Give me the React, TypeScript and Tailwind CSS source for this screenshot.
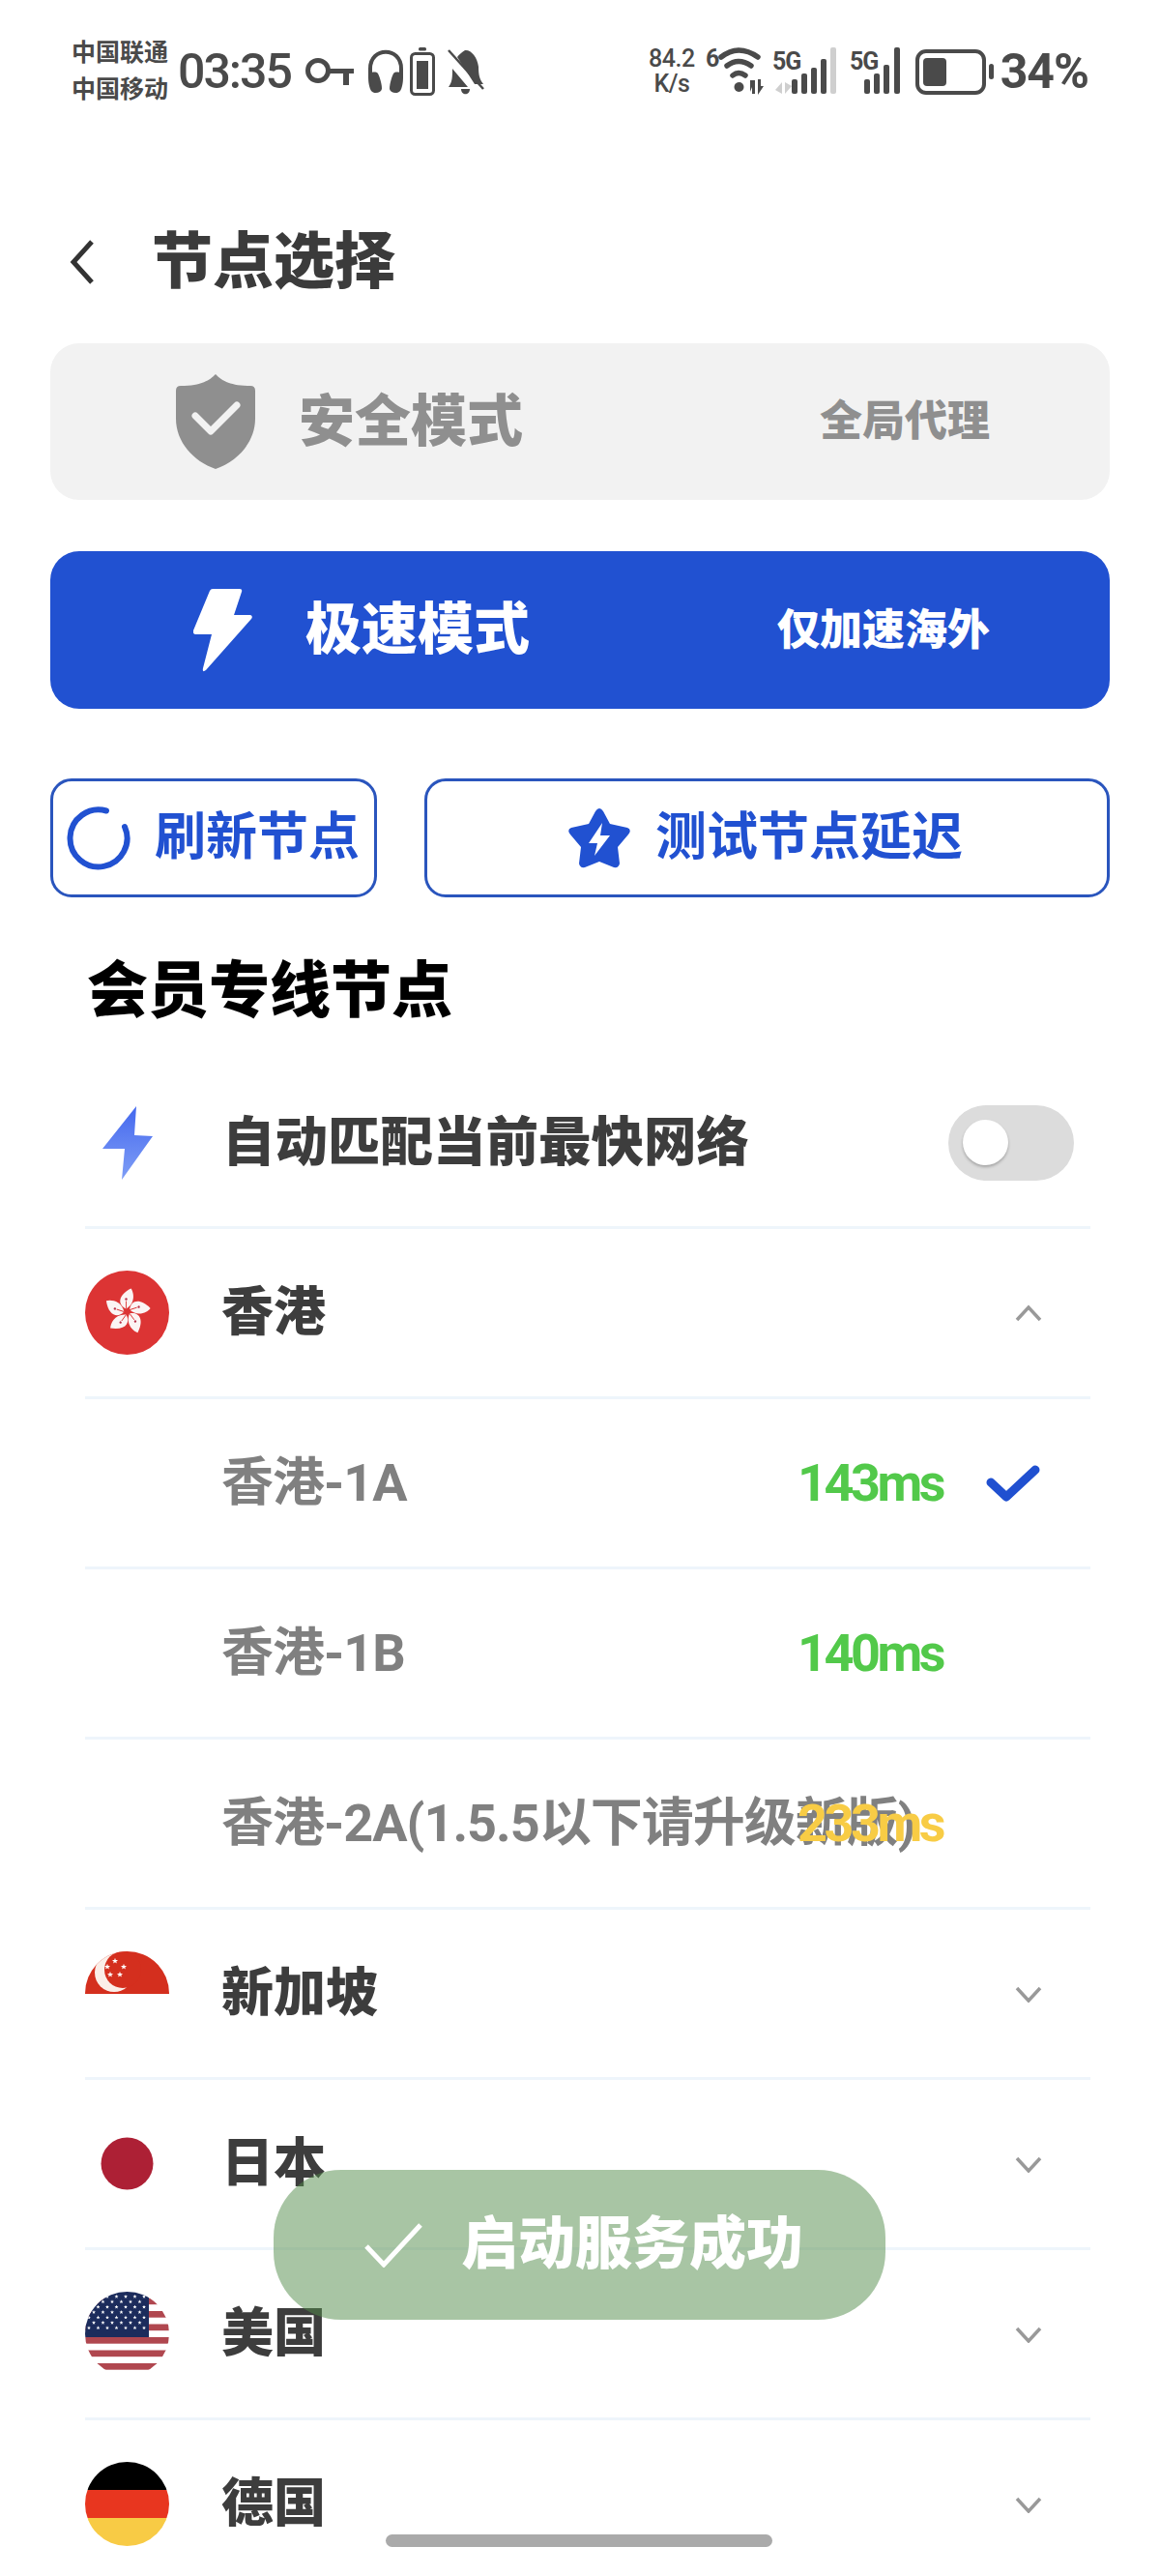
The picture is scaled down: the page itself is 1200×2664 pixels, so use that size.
import React from "react";

const Chevron = ({ up = false }: { up?: boolean }) => (
  <svg width="28" height="18" viewBox="0 0 28 18" fill="none">
    <path
      d={up ? "M2 16 L14 3 L26 16" : "M2 3 L14 16 L26 3"}
      stroke="#999999"
      strokeWidth="3.5"
    />
  </svg>
);

const Star = ({ x, y, r = 3.2, fill = "#ffffff" }: { x: number; y: number; r?: number; fill?: string }) => {
  const points = [];
  for (let i = 0; i < 10; i++) {
    const rad = i % 2 === 0 ? r : r * 0.42;
    const a = (Math.PI / 5) * i - Math.PI / 2;
    points.push(`${x + rad * Math.cos(a)},${y + rad * Math.sin(a)}`);
  }
  return <polygon points={points.join(" ")} fill={fill} />;
};

const HongKongFlag = () => (
  <svg width="87" height="87" viewBox="0 0 87 87">
    <circle cx="43.5" cy="43.5" r="43.5" fill="#dc3434" />
    {[0, 72, 144, 216, 288].map((deg) => (
      <g key={deg} transform={`translate(43.5 42.5) rotate(${deg})`}>
        <path d="M-1 -3 C-10 -7 -10 -17 4 -24 C7 -20 9 -9 -1 -3 Z" fill="#fbf4f4" />
        <circle cx="-1" cy="-13" r="1.2" fill="#b8324a" />
        <path d="M-1 -3 L-1 -11" stroke="#dc3434" strokeWidth="0.9" />
      </g>
    ))}
  </svg>
);

const SingaporeFlag = () => (
  <svg width="87" height="87" viewBox="0 0 87 87">
    <defs>
      <clipPath id="sg-clip">
        <circle cx="43.5" cy="43.5" r="43.5" />
      </clipPath>
    </defs>
    <g clipPath="url(#sg-clip)">
      <rect width="87" height="44" fill="#d42f1e" />
      <circle cx="30" cy="22" r="20" fill="#fbeee8" />
      <circle cx="39" cy="19" r="19" fill="#d42f1e" />
      <Star x={31} y={10} />
      <Star x={23} y={16} />
      <Star x={40} y={16} />
      <Star x={26} y={24} />
      <Star x={36} y={24} />
    </g>
  </svg>
);

const JapanFlag = () => (
  <svg width="87" height="87" viewBox="0 0 87 87">
    <circle cx="43.5" cy="43.5" r="27" fill="#ad2035" />
  </svg>
);

const UsaFlag = () => {
  const stars = [];
  for (let row = 0; row < 7; row++) {
    const count = row % 2 === 0 ? 7 : 6;
    for (let col = 0; col < count; col++) {
      stars.push(<Star key={`${row}-${col}`} x={(row % 2 === 0 ? 4 : 9) + col * 9.5} y={5 + row * 5.4} r={2.1} />);
    }
  }
  return (
    <svg width="87" height="87" viewBox="0 0 87 87">
      <defs>
        <clipPath id="us-clip">
          <circle cx="43.5" cy="43.5" r="43.5" />
        </clipPath>
      </defs>
      <g clipPath="url(#us-clip)">
        <rect width="87" height="87" fill="#ffffff" />
        {[6.5, 20, 33.5, 47, 60.5, 74].map((y) => (
          <rect key={y} y={y} width="87" height="6.7" fill="#b0474f" />
        ))}
        <rect width="66" height="47" fill="#1c2c5c" />
        {stars}
      </g>
    </svg>
  );
};

const GermanyFlag = () => (
  <svg width="87" height="87" viewBox="0 0 87 87">
    <defs>
      <clipPath id="de-clip">
        <circle cx="43.5" cy="43.5" r="43.5" />
      </clipPath>
    </defs>
    <g clipPath="url(#de-clip)">
      <rect width="87" height="29" fill="#000000" />
      <rect y="29" width="87" height="29" fill="#e8361f" />
      <rect y="58" width="87" height="29" fill="#f8cb45" />
    </g>
  </svg>
);

const Bolt = ({ fill }: { fill: string }) => (
  <svg width="62" height="86" viewBox="0 0 62 86">
    <path
      d="M20 0 L48 0 Q51 0 50 3 L42 27 L59 27 Q62 28 60 31 L13 84 Q9 87 10 82 L19 47 L2 47 Q-1 46 0 43 L17 2 Q18 0 20 0 Z"
      fill={fill}
    />
  </svg>
);

const StatusIcons = () => (
  <div className="flex items-center">
    <div className="flex flex-col items-center text-[25px] leading-[26px] font-medium tracking-[-0.5px]">
      <span className="mt-[-1px]">84.2</span>
      <span>K/s</span>
    </div>
    {/* wifi */}
    <svg width="68" height="52" viewBox="0 0 68 52" className="ml-[11px]" fill="none">
      <text x="0" y="21" fontSize="25" fontWeight="700" fill="#4a4a4a">6</text>
      <path d="M16 11 Q34 -3 54 11" stroke="#4a4a4a" strokeWidth="5.5" strokeLinecap="round" />
      <path d="M22 20 Q34 11 47 20" stroke="#4a4a4a" strokeWidth="5.5" strokeLinecap="round" />
      <path d="M28 30 Q34 25 41 30" stroke="#4a4a4a" strokeWidth="5.5" strokeLinecap="round" />
      <circle cx="34.5" cy="42" r="5" fill="#4a4a4a" />
      <path d="M46 47 L46 35 L51 35 L51 49 L48 49 L48 42 Z M54 34 L57 34 L57 41 L60 41 L54 50 Z" fill="#4a4a4a" />
    </svg>
    {/* first sim */}
    <svg width="68" height="50" viewBox="0 0 68 50" className="ml-[1px]" fill="none">
      <text x="0" y="23" fontSize="25" fontWeight="700" letterSpacing="-1" fill="#4a4a4a">5G</text>
      <path d="M3 44 L10 36 L10 48 Z M13 36 L13 48 L20 40 Z" fill="#cfcfcf" />
      <rect x="20" y="33" width="6" height="15" rx="2" fill="#4a4a4a" />
      <rect x="30" y="27" width="6" height="21" rx="2" fill="#4a4a4a" />
      <rect x="40" y="21" width="6" height="27" rx="2" fill="#4a4a4a" />
      <rect x="50" y="12" width="6" height="36" rx="2" fill="#4a4a4a" />
      <rect x="60" y="0" width="6" height="48" rx="2" fill="#cfcfcf" />
    </svg>
    {/* second sim */}
    <svg width="62" height="50" viewBox="0 0 62 50" className="ml-[12px]" fill="none">
      <text x="0" y="23" fontSize="25" fontWeight="700" letterSpacing="-1" fill="#4a4a4a">5G</text>
      <rect x="15" y="33" width="6" height="15" rx="2" fill="#4a4a4a" />
      <rect x="25" y="27" width="6" height="21" rx="2" fill="#4a4a4a" />
      <rect x="35" y="18" width="6" height="30" rx="2" fill="#4a4a4a" />
      <rect x="46" y="0" width="6" height="48" rx="2" fill="#4a4a4a" />
    </svg>
    {/* battery */}
    <div className="ml-[6px] flex items-center">
      <div className="flex items-center w-[73px] h-[47px] border-[4px] border-[#4a4a4a] rounded-[11px] pl-[4px]">
        <div className="w-[24px] h-[29px] bg-[#4a4a4a] rounded-[4px]" />
      </div>
      <div className="ml-[3px] w-[5px] h-[16px] bg-[#4a4a4a] rounded-[3px]" />
    </div>
    <span className="ml-[7px] text-[50px] leading-none font-bold tracking-[-1px]">34%</span>
  </div>
);

const LeftIcons = () => (
  <div className="flex items-center">
    {/* key */}
    <svg width="50" height="32" viewBox="0 0 50 32" className="ml-[15px]" fill="none">
      <circle cx="13" cy="15" r="10.5" stroke="#4a4a4a" strokeWidth="5" />
      <path d="M24 13 H50 V18 H45 V30 H39 V18 H24 Z" fill="#4a4a4a" />
    </svg>
    {/* headphones */}
    <svg width="38" height="46" viewBox="0 0 38 46" className="ml-[14px]" fill="none">
      <path d="M3 30 V20 C3 -3 35 -3 35 20 V30" stroke="#4a4a4a" strokeWidth="4" />
      <path d="M1 29 C1 24 8 22 11 25 C13 29 15 36 15 41 C14 46 6 46 4 43 C2 40 1 34 1 29 Z" fill="#4a4a4a" />
      <path d="M37 29 C37 24 30 22 27 25 C25 29 23 36 23 41 C24 46 32 46 34 43 C36 40 37 34 37 29 Z" fill="#4a4a4a" />
    </svg>
    {/* small battery */}
    <svg width="26" height="50" viewBox="0 0 26 50" className="ml-[6px]" fill="none">
      <rect x="9" y="0" width="8" height="3.5" rx="1.5" fill="#4a4a4a" />
      <rect x="1.5" y="6.5" width="23" height="42" rx="4" stroke="#4a4a4a" strokeWidth="3" />
      <rect x="7" y="14" width="12" height="29" fill="#4a4a4a" />
    </svg>
    {/* muted bell */}
    <svg width="38" height="50" viewBox="0 0 38 50" className="ml-[13px]" fill="none">
      <path d="M18 3 C24 2 31 10 32 20 C32 28 33 33 37 38 L28 38 L10 10 C12 7 15 5 18 3 Z" fill="#4a4a4a" />
      <path d="M5 22 L21 41 L1 41 C5 36 5 30 5 22 Z" fill="#4a4a4a" />
      <path d="M14 43 H23 C23 50 14 50 14 43 Z" fill="#4a4a4a" />
      <path d="M1 3 L37 43" stroke="#4a4a4a" strokeWidth="2.5" />
    </svg>
  </div>
);

const Divider = () => <div className="h-[3px] mx-[88px] w-[1040px] bg-[#eef5fb]" />;

const CountryRow = ({ flag, name, open = false }: { flag: React.ReactNode; name: string; open?: boolean }) => (
  <div className="flex items-center h-[173px] pl-[88px] pr-[122px]">
    <div className="w-[87px] h-[87px] shrink-0">{flag}</div>
    <span className="ml-[54px] flex-1 text-[54px] font-black text-[#3d3d3d]">{name}</span>
    <Chevron up={open} />
  </div>
);

const NodeRow = ({ name, ms, color, active = false }: { name: string; ms: string; color: string; active?: boolean }) => (
  <div className="flex items-center h-[173px] pl-[229px] pr-[72px]">
    <span className="w-0 grow whitespace-nowrap text-[54px] font-bold text-[#808080] tracking-[-1px]">{name}</span>
    <span className={`${color} text-[54px] font-bold tracking-[-3.5px]`}>{ms}</span>
    <div className="w-[153px] flex justify-end pr-[52px]">
      {active && (
        <svg width="56" height="40" viewBox="0 0 56 40" fill="none">
          <path d="M5 19 L21 34 L51 6" stroke="#2050d0" strokeWidth="9" strokeLinecap="round" strokeLinejoin="round" />
        </svg>
      )}
    </div>
  </div>
);

export default function App() {
  return (
    <div className="relative w-[1200px] h-[2664px] overflow-hidden bg-white font-['Roboto','Noto_Sans_CJK_SC',sans-serif]">
      {/* status bar */}
      <div className="flex items-center justify-between h-[68px] mt-[40px] pl-[74px] pr-[74px] text-[#4a4a4a]">
        <div className="flex items-center">
          <div className="flex flex-col text-[25px] leading-[38px] font-bold">
            <span>中国联通</span>
            <span>中国移动</span>
          </div>
          <span className="ml-[10px] text-[50px] leading-none font-medium tracking-[-2px]">03:35</span>
          <LeftIcons />
        </div>
        <StatusIcons />
      </div>

      {/* header */}
      <div className="flex items-center h-[72px] mt-[127px] pl-[72px]">
        <svg width="26" height="46" viewBox="0 0 26 46" fill="none">
          <path d="M23 2 L4 23 L23 44" stroke="#333333" strokeWidth="5" />
        </svg>
        <span className="ml-[59px] text-[63px] font-black text-[#3b3b3b]">节点选择</span>
      </div>

      {/* mode cards */}
      <div className="flex flex-col gap-[53px] mx-[52px] mt-[48px]">
        <div className="flex items-center h-[162px] rounded-[30px] bg-[#f2f2f2] pl-[130px] pr-[124px]">
          <svg width="82" height="98" viewBox="0 0 82 98">
            <path
              d="M41 0 C47 6 55 12 77 12 Q82 12 82 17 L82 46 C82 70 64 90 41 98 C18 90 0 70 0 46 L0 17 Q0 12 5 12 C27 12 35 6 41 0 Z"
              fill="#8f8f8f"
            />
            <path d="M20 43 L36 59 L63 32" stroke="#f2f2f2" strokeWidth="7" fill="none" strokeLinecap="round" strokeLinejoin="round" />
          </svg>
          <span className="ml-[45px] flex-1 text-[58px] font-black text-[#8f8f8f]">安全模式</span>
          <span className="text-[44px] font-black text-[#8f8f8f]">全局代理</span>
        </div>
        <div className="flex items-center h-[163px] rounded-[30px] bg-[#2151d1] pl-[148px] pr-[124px]">
          <Bolt fill="#ffffff" />
          <span className="ml-[54px] flex-1 text-[58px] font-black text-white">极速模式</span>
          <span className="text-[44px] font-black text-white">仅加速海外</span>
        </div>
      </div>

      {/* actions */}
      <div className="flex gap-[49px] mx-[52px] mt-[72px]">
        <div className="flex items-center w-[338px] h-[123px] rounded-[22px] border-[3px] border-[#2a55bd] pl-[14px]">
          <svg width="66" height="66" viewBox="0 0 66 66" fill="none">
            <path
              d="M41 4.5 A29.5 29.5 0 1 0 60 21"
              stroke="#2151d1"
              strokeWidth="6"
              strokeLinecap="round"
            />
          </svg>
          <span className="ml-[25px] text-[53px] font-bold text-[#2151d1]">刷新节点</span>
        </div>
        <div className="flex flex-1 items-center justify-center h-[123px] rounded-[22px] border-[3px] border-[#2a55bd] pr-[4px]">
          <svg width="66" height="64" viewBox="0 0 66 64">
            <path
              d="M33 1 Q35 1 37 4 L44 17 L62 21 Q67 23 63 28 L52 41 L54 58 Q53 63 48 62 L33 56 L18 62 Q13 63 12 58 L14 41 L3 28 Q-1 23 4 21 L22 17 L29 4 Q31 1 33 1 Z"
              fill="#2151d1"
            />
            <path d="M36 16 L22 37 L31 37 L28 50 L44 29 L34 29 Z" fill="#ffffff" />
          </svg>
          <span className="ml-[25px] text-[53px] font-bold text-[#2151d1]">测试节点延迟</span>
        </div>
      </div>

      {/* member nodes */}
      <h2 className="ml-[90px] mt-[52px] text-[63px] leading-[90px] font-black text-black">会员专线节点</h2>

      <div className="flex items-center h-[173px] mt-[25px] pl-[106px] pr-[89px]">
        <svg width="52" height="76" viewBox="0 0 52 76">
          <defs>
            <linearGradient id="auto-bolt" x1="0" y1="0" x2="0" y2="1">
              <stop offset="0" stopColor="#4468ee" />
              <stop offset="1" stopColor="#7f9ef6" />
            </linearGradient>
          </defs>
          <path d="M35 0 L33 30 L52 31 L20 76 L23 44 L0 44 Z" fill="url(#auto-bolt)" />
        </svg>
        <span className="ml-[72px] flex-1 text-[54.5px] font-black text-[#3d3d3d]">自动匹配当前最快网络</span>
        <div className="flex items-center w-[130px] h-[78px] rounded-full bg-[#dcdcdc] pl-[15px]">
          <div className="w-[47px] h-[47px] rounded-full bg-white shadow-[0_2px_3px_rgba(0,0,0,0.25)]" />
        </div>
      </div>
      <Divider />
      <CountryRow flag={<HongKongFlag />} name="香港" open />
      <Divider />
      <NodeRow name="香港-1A" ms="143ms" color="text-[#52c94a]" active />
      <Divider />
      <NodeRow name="香港-1B" ms="140ms" color="text-[#52c94a]" />
      <Divider />
      <NodeRow name="香港-2A(1.5.5以下请升级新版)" ms="233ms" color="text-[#f8cc45]" />
      <Divider />
      <CountryRow flag={<SingaporeFlag />} name="新加坡" />
      <Divider />
      <CountryRow flag={<JapanFlag />} name="日本" />
      <Divider />
      <CountryRow flag={<UsaFlag />} name="美国" />
      <Divider />
      <CountryRow flag={<GermanyFlag />} name="德国" />

      {/* toast */}
      <div className="absolute left-[283px] top-[2244px] flex items-center w-[633px] h-[155px] rounded-[70px] bg-[#518c49]/50 pl-[94px]">
        <svg width="60" height="46" viewBox="0 0 60 46" fill="none">
          <path d="M2 24 L20 43 L58 2" stroke="#ffffff" strokeWidth="5" />
        </svg>
        <span className="ml-[40px] text-[59px] font-black text-white">启动服务成功</span>
      </div>

      {/* home indicator */}
      <div className="absolute left-[399px] top-[2621px] w-[400px] h-[13px] rounded-full bg-[#aaaaaa]" />
    </div>
  );
}
